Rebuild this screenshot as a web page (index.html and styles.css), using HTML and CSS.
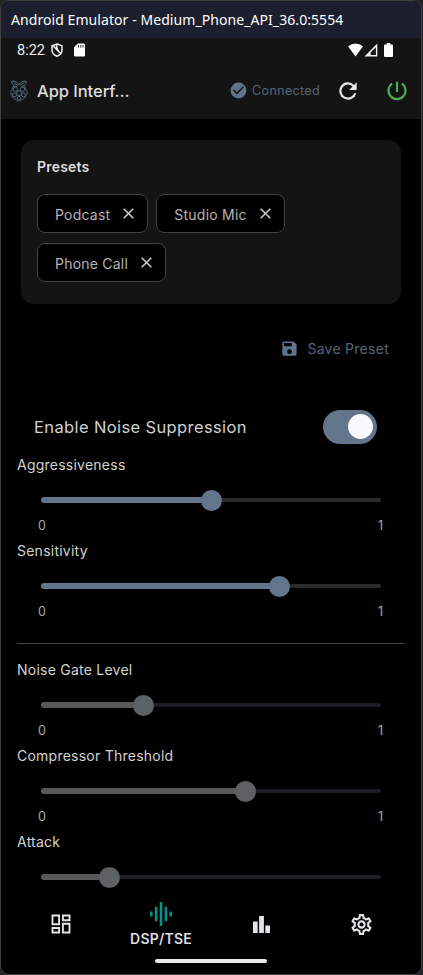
FILE: index.html
```html
<!DOCTYPE html>
<html lang="en">
<head>
<meta charset="utf-8">
<title>App Interface</title>
<link rel="stylesheet" href="styles.css">
</head>
<body>
<div class="window">
  <div class="titlebar"><span class="t-title">Android Emulator - Medium_Phone_API_36.0:5554</span></div>
  <header class="top">
    <div class="status">
      <span class="clock">8:22</span>
      <svg class="shield" width="12" height="14" viewBox="0 0 12 14" fill="none" stroke="#eee" stroke-width="1.5"><path d="M6 1 11 2.8V7C11 10 8.8 12.3 6 13.2 3.2 12.3 1 10 1 7V2.8ZM2 2.8 10 11M5.8 1.2C4.6 3.7 5.8 5.6 8 8.9"/></svg>
      <svg class="sd" width="11" height="14" viewBox="0 0 11 14"><path fill="#fff" d="M4 .5H9.7Q11 .5 11 1.8V12.2Q11 13.5 9.7 13.5H1.3Q0 13.5 0 12.2V4.3Z"/><path stroke="#333" stroke-width="1" d="M4.5 2v2.6M6.8 2v2.6M9 2v2.6"/></svg>
      <span class="grow"></span>
      <svg class="wifi" width="15" height="14" viewBox="0 0 15 14"><path fill="#fff" d="M0 3.2Q7.5-2.4 15 3.2L7.5 13.5Z"/></svg>
      <svg class="signal" width="14" height="14" viewBox="0 0 14 14"><path fill="#f0f0f0" fill-rule="evenodd" d="M13.3.6V13.5H.5ZM11.9 4.2 6.6 9.4V12H11.9Z"/></svg>
      <svg class="battery" width="9" height="14" viewBox="0 0 9 14"><path fill="#fff" d="M2.7 0h3.6v1.4H8Q9 1.4 9 2.4V13Q9 14 8 14H1Q0 14 0 13V2.4Q0 1.4 1 1.4H2.7Z"/></svg>
    </div>
    <div class="appbar">
      <svg class="berry" width="18" height="22" viewBox="0 0 18 22" fill="none" stroke="#54697f" stroke-width="1">
        <path d="M8.7 4.8C7.5 2 5 .7 1.8 1.2 1.6 4 3.6 6.3 6.7 6.4M9.3 4.8C10.5 2 13 .7 16.2 1.2 16.4 4 14.4 6.3 11.3 6.4M3.5 2.4 8 5.5M14.5 2.4 10 5.5"/>
        <path d="M4.2 6C2.4 7 2 8.5 2.2 9.5.3 11 .3 14 2 15.4 2.4 18 4.5 19 5.8 19.4 7.5 21.5 10.5 21.5 12.2 19.4 13.5 19 15.6 18 16 15.4 17.7 14 17.7 11 15.8 9.5 16 8.5 15.6 7 13.8 6"/>
        <circle cx="9" cy="13.2" r="2.4"/><circle cx="5.4" cy="9.3" r="2.2"/><circle cx="12.6" cy="9.3" r="2.2"/><circle cx="4.5" cy="14.9" r="2"/><circle cx="13.5" cy="14.9" r="2"/><circle cx="9" cy="18.3" r="1.9"/>
      </svg>
      <h1 class="app-name">App Interf...</h1>
      <span class="grow"></span>
      <svg width="19" height="19" viewBox="0 0 24 24" fill="#607489"><path d="M12 2a10 10 0 1 0 0 20 10 10 0 0 0 0-20Zm-2 15-5-5 1.4-1.4L10 14.2l7.6-7.6L19 8Z"/></svg>
      <span class="connected">Connected</span>
      <svg class="refresh" width="26" height="26" viewBox="0 0 24 24" fill="#e8e8e8"><path d="M17.65 6.35A8 8 0 1 0 19.73 14h-2.08A6 6 0 1 1 12 6c1.66 0 3.14.69 4.22 1.78L13 11h7V4Z"/></svg>
      <svg class="power" width="20" height="20" viewBox="0 0 20 20" fill="none" stroke="#4caf50" stroke-width="2.1"><path d="M10 .8V11M5.1 2.7A8.5 8.5 0 1 0 14.9 2.7"/></svg>
    </div>
  </header>

  <main class="content">
    <section class="presets">
      <h2 class="presets-title">Presets</h2>
      <div class="chips">
        <span class="chip"><span>Podcast</span><svg width="11" height="11" viewBox="0 0 11 11" stroke="#d0d0d0" stroke-width="1.5"><path d="m.7.7 9.6 9.6M10.3.7.7 10.3"/></svg></span>
        <span class="chip"><span>Studio Mic</span><svg width="11" height="11" viewBox="0 0 11 11" stroke="#d0d0d0" stroke-width="1.5"><path d="m.7.7 9.6 9.6M10.3.7.7 10.3"/></svg></span>
        <span class="chip"><span>Phone Call</span><svg width="11" height="11" viewBox="0 0 11 11" stroke="#d0d0d0" stroke-width="1.5"><path d="m.7.7 9.6 9.6M10.3.7.7 10.3"/></svg></span>
      </div>
    </section>
    <div class="save">
      <svg width="19" height="19" viewBox="0 0 24 24" fill="#607489"><path fill-rule="evenodd" d="M17 3H5a2 2 0 0 0-2 2v14a2 2 0 0 0 2 2h14a2 2 0 0 0 2-2V7Zm-5 16a3 3 0 1 1 0-6 3 3 0 0 1 0 6Zm3-10H5V5h10Z"/></svg>
      <span>Save Preset</span>
    </div>
    <div class="toggle-row"><span>Enable Noise Suppression</span><span class="switch"><i class="knob"></i></span></div>

    <div class="control"><span class="label">Aggressiveness</span>
      <div class="track"><i class="fill" style="width:50%"></i><i class="thumb"></i><i class="rest"></i></div>
      <div class="range"><span>0</span><span>1</span></div></div>
    <div class="control"><span class="label">Sensitivity</span>
      <div class="track"><i class="fill" style="width:70%"></i><i class="thumb"></i><i class="rest"></i></div>
      <div class="range"><span>0</span><span>1</span></div></div>
    <hr class="divider">
    <div class="control off"><span class="label">Noise Gate Level</span>
      <div class="track"><i class="fill" style="width:30%"></i><i class="thumb"></i><i class="rest"></i></div>
      <div class="range"><span>0</span><span>1</span></div></div>
    <div class="control off"><span class="label">Compressor Threshold</span>
      <div class="track"><i class="fill" style="width:60%"></i><i class="thumb"></i><i class="rest"></i></div>
      <div class="range"><span>0</span><span>1</span></div></div>
    <div class="control off"><span class="label">Attack</span>
      <div class="track"><i class="fill" style="width:20%"></i><i class="thumb"></i><i class="rest"></i></div></div>
  </main>

  <nav class="nav">
    <span class="tab"><svg width="20" height="20" viewBox="0 0 20 20" fill="none" stroke="#e4e2e6" stroke-width="1.9"><path d="M1.5 1.5h6.6v8.7H1.5ZM11.9 1.5h6.6v4.8h-6.6ZM1.5 14h6.6v4.5H1.5ZM11.9 9.8h6.6v8.7h-6.6Z"/></svg></span>
    <span class="tab active"><svg width="22" height="24" viewBox="0 0 22 24" stroke="#009688" stroke-width="2.5"><path d="M1.3 9.5v5M6.1 4.8v14.4M11 0v24M15.9 4.8v14.4M20.7 9.5v5"/></svg><span class="tab-name">DSP/TSE</span></span>
    <span class="tab"><svg width="17" height="17" viewBox="0 0 17 17" fill="#e4e2e6"><path d="M0 5.5h4.7V17H0ZM6.1 0h4.8v17H6.1ZM12.3 9.5H17V17h-4.7Z"/></svg></span>
    <span class="tab"><svg width="25" height="25" viewBox="0 0 24 24" fill="#e4e2e6"><path d="M19.43 12.98c.04-.32.07-.64.07-.98s-.03-.66-.07-.98l2.11-1.65c.19-.15.24-.42.12-.64l-2-3.46a.5.5 0 0 0-.61-.22l-2.49 1c-.52-.4-1.08-.73-1.69-.98l-.38-2.65A.49.49 0 0 0 14 2h-4a.49.49 0 0 0-.49.42l-.38 2.65c-.61.25-1.17.59-1.69.98l-2.49-1a.5.5 0 0 0-.61.22l-2 3.46c-.13.22-.07.49.12.64l2.11 1.65c-.04.32-.07.65-.07.98s.03.66.07.98l-2.11 1.65c-.19.15-.24.42-.12.64l2 3.46c.12.22.39.3.61.22l2.49-1c.52.4 1.08.73 1.69.98l.38 2.65c.03.24.24.42.49.42h4c.25 0 .46-.18.49-.42l.38-2.65c.61-.25 1.17-.59 1.69-.98l2.49 1c.23.09.49 0 .61-.22l2-3.46a.5.5 0 0 0-.12-.64Zm-1.98-1.71c.04.31.05.52.05.73s-.02.43-.05.73l-.14 1.13.89.7 1.08.84-.7 1.21-1.27-.51-1.04-.42-.9.68c-.43.32-.84.56-1.25.73l-1.06.43-.16 1.13-.2 1.35h-1.4l-.19-1.35-.16-1.13-1.06-.43c-.43-.18-.83-.41-1.23-.71l-.91-.7-1.06.43-1.27.51-.7-1.21 1.08-.84.89-.7-.14-1.13c-.03-.31-.05-.54-.05-.74s.02-.43.05-.73l.14-1.13-.89-.7-1.08-.84.7-1.21 1.27.51 1.04.42.9-.68c.43-.32.84-.56 1.25-.73l1.06-.43.16-1.13.2-1.35h1.39l.19 1.35.16 1.13 1.06.43c.43.18.83.41 1.23.71l.91.7 1.06-.43 1.27-.51.7 1.21-1.07.85-.89.7ZM12 8a4 4 0 1 0 0 8 4 4 0 0 0 0-8Zm0 6a2 2 0 1 1 0-4 2 2 0 0 1 0 4Z"/></svg></span>
  </nav>
  <div class="home"></div>
</div>
</body>
</html>
```
FILE: styles.css
```css
* { box-sizing: border-box; }
body { margin: 0; background: #242526; font-family: Inter, sans-serif; color: #dedede; }
svg { display: block; flex: none; }
.window { width: 422px; height: 975px; border: 1px solid #414141; border-radius: 9px; background: #000; overflow: hidden; display: flex; flex-direction: column; }
.grow { flex: 1; }
.titlebar { height: 37px; flex: none; background: #1b1f2e; padding-left: 10px; line-height: 37px; font-family: "Noto Sans", sans-serif; font-size: 14px; color: #fff; white-space: nowrap; }
.t-title { letter-spacing: .07px; }
.top { height: 81px; flex: none; background: #141414; }
.status { height: 24px; display: flex; align-items: center; padding: 0 28px 0 16px; }
.clock { font: 400 14.5px Roboto, sans-serif; color: #ededed; width: 34px; }
.sd { margin-left: 11px; }
.signal { margin-left: 1px; }
.battery { margin-left: 6px; }
.appbar { height: 57px; display: flex; align-items: center; padding: 0 14px 0 9px; }
.app-name { margin: 0 0 0 9px; font-size: 16.5px; font-weight: 500; letter-spacing: -.05px; line-height: 24px; color: #dedede; }
.connected { margin: 0 15px 0 4px; font-size: 12.5px; letter-spacing: .35px; color: #53667a; }
.power { margin-left: 26px; }
.content { flex: 1; min-height: 0; padding: 21px 16px 0; overflow: hidden; }
.presets { margin: 0 4px; height: 164px; border-radius: 13px; background: #141414; padding: 17px 16px; }
.presets-title { margin: 0 0 18px; font-size: 14px; font-weight: 600; letter-spacing: .2px; line-height: 19px; }
.chips { display: flex; flex-wrap: wrap; gap: 10px 8px; }
.chip { height: 39px; border: 1px solid #424242; border-radius: 8px; background: #000; padding: 1px 13px 0 17px; display: flex; align-items: center; gap: 13px; font-size: 14px; letter-spacing: .22px; color: #b4b4b4; white-space: nowrap; }
.chip svg { margin-top: -2px; }
.save { height: 20px; margin: 34px 16px 0; display: flex; align-items: center; justify-content: flex-end; gap: 8px; font-size: 14px; letter-spacing: .27px; color: #53667a; }
.toggle-row { height: 34px; margin: 52px 28px 0 17px; display: flex; align-items: center; justify-content: space-between; font-size: 16.5px; letter-spacing: .38px; color: #d0d0d0; }
.switch { width: 54px; height: 34px; border-radius: 17px; background: #62758a; padding: 4px 4px 0 25px; }
.knob { display: block; width: 25px; height: 25px; border-radius: 50%; background: #f7f9fa; }
.control { height: 86px; }
.toggle-row + .control { margin-top: 12px; }
.label { display: block; height: 20px; line-height: 18px; font-size: 14px; letter-spacing: .24px; color: #d2d2d2; }
.track { height: 22px; margin: 13px 24px 0; display: flex; align-items: center; }
.fill { height: 6px; flex: none; border-radius: 3px; background: #62758a; }
.thumb { width: 21px; height: 21px; margin: 0 -10.5px; flex: none; border-radius: 50%; background: #62758a; z-index: 1; }
.rest { height: 4px; flex: 1; border-radius: 2px; background: #2c2c2e; }
.off .fill { background: #595959; }
.off .thumb { background: #5d6163; }
.off .rest { background: #1e1d24; }
.range { height: 18px; margin: 6px 21px 0; display: flex; justify-content: space-between; font-size: 12.5px; line-height: 18px; color: #aaa; }
.range span:last-child { margin-right: 1px; }
.divider { height: 1px; margin: 15px 0 17px; border: 0; background: #434343; }
.nav { height: 71px; flex: none; padding: 1px 10px 0; display: flex; }
.tab { flex: 1; display: flex; flex-direction: column; align-items: center; justify-content: center; }
.tab.active { justify-content: flex-start; padding-top: 13px; }
.tab-name { font-size: 14px; font-weight: 600; line-height: 20px; margin-top: 3px; letter-spacing: .2px; color: #dddbe0; }
.home { width: 112px; height: 4px; margin: 0 auto 11px; flex: none; border-radius: 2px; background: #e9e9e9; }
```
